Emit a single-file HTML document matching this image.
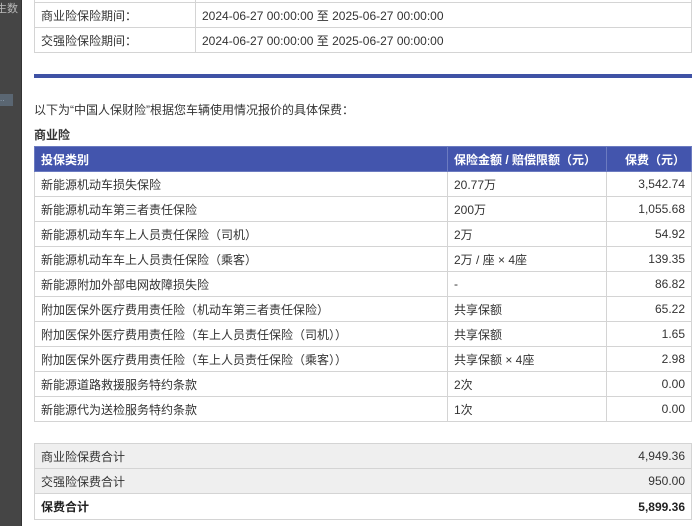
<!DOCTYPE html>
<html><head><meta charset="utf-8"><style>
*{margin:0;padding:0;box-sizing:border-box}
body{width:700px;height:526px;overflow:hidden;background:#fff;font-family:"Liberation Sans","Noto Sans CJK SC",sans-serif;font-size:12px;color:#333;position:relative}
.side{position:absolute;left:0;top:0;width:22px;height:526px;background:#454545;border-right:1px solid #333}
.side .t{position:absolute;left:0;top:0;color:#bbb;font-size:11px;white-space:nowrap;margin-left:-4px}
.side .b{position:absolute;left:0;top:94px;width:13px;height:12px;background:#5a6672;color:#9ab;font-size:8px}
table{position:absolute;left:34px;border-collapse:collapse;width:658px}
td,th{border:1px solid #d4d4d4;height:25px;padding:0 6px;text-align:left;font-weight:normal;white-space:nowrap}
th{background:#4355ad;color:#fff;font-weight:bold;border-color:#6c7bc0}
.r{text-align:right}
.blue{position:absolute;left:34px;top:74px;width:658px;height:4px;background:#3f52a5}
.txt{position:absolute;left:34px;top:101px}
.h{position:absolute;left:34px;top:126px;font-weight:bold}
.sum td{background:#efefef;border-left:none;border-right:none}
.sum td:first-child{border-left:1px solid #d4d4d4}
.sum td:last-child{border-right:1px solid #d4d4d4}
.sum tr.tot td{background:#fff;font-weight:bold;color:#222}
</style></head><body>
<div class="side"><div class="t">生数</div><div class="b">..</div></div>
<table style="top:-23px">
<tr><td style="width:161px"></td><td></td></tr>
<tr><td>商业险保险期间：</td><td>2024-06-27 00:00:00 至 2025-06-27 00:00:00</td></tr>
<tr><td>交强险保险期间：</td><td>2024-06-27 00:00:00 至 2025-06-27 00:00:00</td></tr>
</table>
<div class="blue"></div>
<div class="txt">以下为“中国人保财险”根据您车辆使用情况报价的具体保费：</div>
<div class="h">商业险</div>
<table style="top:146px">
<tr><th style="width:413px">投保类别</th><th style="width:159px">保险金额 / 赔偿限额（元）</th><th class="r">保费（元）</th></tr>
<tr><td>新能源机动车损失保险</td><td>20.77万</td><td class="r">3,542.74</td></tr>
<tr><td>新能源机动车第三者责任保险</td><td>200万</td><td class="r">1,055.68</td></tr>
<tr><td>新能源机动车车上人员责任保险（司机）</td><td>2万</td><td class="r">54.92</td></tr>
<tr><td>新能源机动车车上人员责任保险（乘客）</td><td>2万 / 座 × 4座</td><td class="r">139.35</td></tr>
<tr><td>新能源附加外部电网故障损失险</td><td>-</td><td class="r">86.82</td></tr>
<tr><td>附加医保外医疗费用责任险（机动车第三者责任保险）</td><td>共享保额</td><td class="r">65.22</td></tr>
<tr><td>附加医保外医疗费用责任险（车上人员责任保险（司机））</td><td>共享保额</td><td class="r">1.65</td></tr>
<tr><td>附加医保外医疗费用责任险（车上人员责任保险（乘客））</td><td>共享保额 × 4座</td><td class="r">2.98</td></tr>
<tr><td>新能源道路救援服务特约条款</td><td>2次</td><td class="r">0.00</td></tr>
<tr><td>新能源代为送检服务特约条款</td><td>1次</td><td class="r">0.00</td></tr>
</table>
<table class="sum" style="top:443px">
<tr><td>商业险保费合计</td><td class="r">4,949.36</td></tr>
<tr><td>交强险保费合计</td><td class="r">950.00</td></tr>
<tr class="tot"><td style="height:26px">保费合计</td><td class="r">5,899.36</td></tr>
</table>
</body></html>
